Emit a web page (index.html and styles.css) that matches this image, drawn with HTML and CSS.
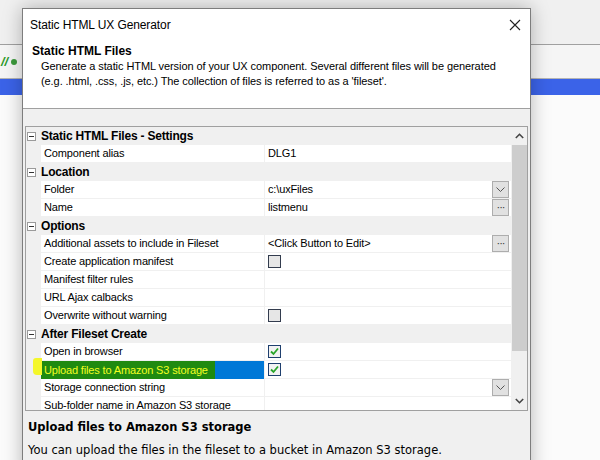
FILE: index.html
```html
<!DOCTYPE html>
<html>
<head>
<meta charset="utf-8">
<link rel="stylesheet" href="styles.css">
</head>
<body>
<div class="desktop">
  <div class="band band-top"></div>
  <div class="band band-tool"><span class="slashes">//</span><span class="gicon"></span></div>
  <div class="band band-blue"></div>
  <div class="band band-rest"></div>
</div>

<div class="dialog">
  <div class="titlebar">
    <span class="title">Static HTML UX Generator</span>
    <svg class="close" width="12" height="12" viewBox="0 0 12 12"><path d="M1 1 L11 11 M11 1 L1 11" stroke="#222" stroke-width="1.1" fill="none"/></svg>
  </div>
  <div class="header">
    <div class="h-title">Static HTML Files</div>
    <div class="h-desc">Generate a static HTML version of your UX component. Several different files will be generated<br>(e.g. .html, .css, .js, etc.) The collection of files is referred to as a 'fileset'.</div>
  </div>
  <div class="body">
    <div class="grid">
      <div class="rows">
        <div class="row cat"><span class="gut"><span class="minus"></span></span><span class="cat-label">Static HTML Files - Settings</span></div>
        <div class="row"><span class="gut"></span><span class="lab">Component alias</span><span class="val">DLG1</span></div>
        <div class="row cat"><span class="gut"><span class="minus"></span></span><span class="cat-label">Location</span></div>
        <div class="row"><span class="gut"></span><span class="lab">Folder</span><span class="val">c:\uxFiles<span class="btn drop"><svg width="9" height="5" viewBox="0 0 9 5"><path d="M0.5 0.5 L4.5 4.5 L8.5 0.5" stroke="#555" fill="none"/></svg></span></span></div>
        <div class="row"><span class="gut"></span><span class="lab">Name</span><span class="val">listmenu<span class="btn dots">&middot;&middot;&middot;</span></span></div>
        <div class="row cat"><span class="gut"><span class="minus"></span></span><span class="cat-label">Options</span></div>
        <div class="row"><span class="gut"></span><span class="lab">Additional assets to include in Fileset</span><span class="val">&lt;Click Button to Edit&gt;<span class="btn dots">&middot;&middot;&middot;</span></span></div>
        <div class="row"><span class="gut"></span><span class="lab">Create application manifest</span><span class="val"><span class="cb"></span></span></div>
        <div class="row"><span class="gut"></span><span class="lab">Manifest filter rules</span><span class="val"></span></div>
        <div class="row"><span class="gut"></span><span class="lab">URL Ajax calbacks</span><span class="val"></span></div>
        <div class="row"><span class="gut"></span><span class="lab">Overwrite without warning</span><span class="val"><span class="cb"></span></span></div>
        <div class="row cat"><span class="gut"><span class="minus"></span></span><span class="cat-label">After Fileset Create</span></div>
        <div class="row"><span class="gut"></span><span class="lab">Open in browser</span><span class="val"><span class="cb on"><svg width="11" height="11" viewBox="0 0 11 11"><path d="M2 5.5 L4.5 8 L9 2.5" stroke="#2aa52a" stroke-width="1.8" fill="none"/></svg></span></span></div>
        <div class="row"><span class="gut"><span class="hl-edge"></span></span><span class="lab sel"><span class="hl-text">Upload files to Amazon S3 storage</span></span><span class="val"><span class="cb on"><svg width="11" height="11" viewBox="0 0 11 11"><path d="M2 5.5 L4.5 8 L9 2.5" stroke="#2aa52a" stroke-width="1.8" fill="none"/></svg></span></span></div>
        <div class="row"><span class="gut"></span><span class="lab">Storage connection string</span><span class="val"><span class="btn drop"><svg width="9" height="5" viewBox="0 0 9 5"><path d="M0.5 0.5 L4.5 4.5 L8.5 0.5" stroke="#555" fill="none"/></svg></span></span></div>
        <div class="row"><span class="gut"></span><span class="lab">Sub-folder name in Amazon S3 storage</span><span class="val"></span></div>
      </div>
      <div class="scroll">
        <svg class="arr" width="9" height="6" viewBox="0 0 9 6"><path d="M0.8 5 L4.5 1.3 L8.2 5" stroke="#444" stroke-width="1.6" fill="none"/></svg>
        <div class="thumb"></div>
        <div class="track"></div>
        <svg class="arr" width="9" height="6" viewBox="0 0 9 6"><path d="M0.8 1 L4.5 4.7 L8.2 1" stroke="#444" stroke-width="1.6" fill="none"/></svg>
      </div>
    </div>
    <div class="info">
      <div class="i-title">Upload files to Amazon S3 storage</div>
      <div class="i-text">You can upload the files in the fileset to a bucket in Amazon S3 storage.</div>
    </div>
  </div>
</div>
</body>
</html>
```

FILE: styles.css
```css
html, body {
  margin: 0;
  padding: 0;
}
body {
  width: 600px;
  height: 460px;
  overflow: hidden;
  position: relative;
  font-family: "Liberation Sans", Arial, sans-serif;
  font-size: 12px;
  color: #000;
  background: #fafafa;
}
.desktop {
  display: flex;
  flex-direction: column;
  height: 460px;
}
.band-top {
  height: 44px;
  background: #f0f0f0;
  border-bottom: 1px solid #a0a0a0;
}
.band-tool {
  height: 33px;
  background: #f5f5f5;
  border-bottom: 1px solid #b4b4b4;
  display: flex;
  align-items: center;
  padding-left: 1px;
}
.slashes {
  color: #2a9a2a;
  font-weight: bold;
  font-style: italic;
  font-size: 13px;
}
.gicon {
  width: 6px;
  height: 6px;
  border-radius: 50%;
  background: #3c9a3c;
  margin-left: 3px;
}
.band-blue {
  height: 16px;
  background: #3b63e8;
}
.band-rest {
  flex: 1;
  background: #fbfbfb;
}

.dialog {
  position: absolute;
  left: 22px;
  top: 8px;
  width: 507px;
  height: 470px;
  border: 1px solid #7d7d7d;
  background: #f0f0f0;
  box-shadow: 0 0 18px rgba(0,0,0,0.28);
  display: flex;
  flex-direction: column;
}
.titlebar {
  height: 31px;
  background: #fff;
  display: flex;
  align-items: center;
  justify-content: space-between;
  padding: 0 9px 0 7px;
}
.title {
  font-size: 12px;
  letter-spacing: -0.1px;
}
.close {
  display: block;
}
.header {
  background: #fff;
  border-bottom: 1px solid #a0a0a0;
  padding: 3px 0 0 9px;
  box-sizing: border-box;
  height: 69px;
}
.h-title {
  font-weight: bold;
  font-size: 12px;
  line-height: 17px;
}
.h-desc {
  padding-left: 9px;
  line-height: 15px;
  font-size: 11px;
  letter-spacing: -0.08px;
  margin-top: -1px;
}
.body {
  flex: 1;
  padding: 17px 2px 0 2px;
}
.grid {
  height: 283px;
  border: 1px solid #a0a0a0;
  background: #fff;
  display: flex;
  overflow: hidden;
}
.rows {
  flex: 1;
  display: flex;
  flex-direction: column;
}
.row {
  height: 18px;
  flex: none;
  display: flex;
  box-sizing: border-box;
  font-size: 11px;
  letter-spacing: -0.15px;
}
.gut {
  width: 15px;
  flex: none;
  background: #f0f0f0;
  position: relative;
  display: flex;
  align-items: center;
  padding-left: 1px;
  box-sizing: border-box;
}
.minus {
  width: 9px;
  height: 9px;
  box-sizing: border-box;
  border: 1px solid #9a9a9a;
  background: #fff;
  position: relative;
}
.minus::after {
  content: "";
  position: absolute;
  left: 1px;
  top: 3px;
  width: 5px;
  height: 1px;
  background: #333;
}
.cat {
  background: #f0f0f0;
}
.cat-label {
  font-weight: bold;
  font-size: 12px;
  letter-spacing: -0.2px;
  line-height: 18px;
}
.lab {
  width: 224px;
  flex: none;
  border-bottom: 1px solid #f0f0f0;
  border-right: 1px solid #f0f0f0;
  padding-left: 3px;
  line-height: 17px;
  white-space: nowrap;
  overflow: hidden;
  box-sizing: border-box;
}
.val {
  flex: 1;
  border-bottom: 1px solid #f0f0f0;
  padding-left: 3px;
  line-height: 17px;
  display: flex;
  align-items: center;
  position: relative;
}
.lab.sel {
  background: #0078d7;
  color: #f2ff22;
  padding-left: 0;
  line-height: 18px;
  border-bottom: none;
}
.hl-text {
  display: inline-block;
  background: #1f8a10;
  padding-left: 3px;
  padding-right: 7px;
}
.hl-edge {
  position: absolute;
  left: 7px;
  top: -3px;
  width: 9px;
  height: 17px;
  background: #f4f72a;
  border-radius: 3px 0 0 4px;
}
.btn {
  position: absolute;
  right: 2px;
  top: 0;
  width: 15px;
  height: 15px;
  background: #e1e1e1;
  border: 1px solid #adadad;
  display: flex;
  align-items: center;
  justify-content: center;
  font-size: 11px;
  line-height: 1;
  color: #333;
  letter-spacing: -1px;
}
.cb {
  width: 13px;
  height: 13px;
  box-sizing: border-box;
  border: 1px solid #333c4e;
  background: #e6e6e6;
  display: flex;
  align-items: center;
  justify-content: center;
}
.cb.on {
  border-color: #1f3f6e;
  background: #f2f2f2;
}
.scroll {
  width: 16px;
  flex: none;
  background: #f0f0f0;
  display: flex;
  flex-direction: column;
  align-items: center;
}
.arr {
  display: block;
  margin: 6px 0;
}
.thumb {
  width: 15px;
  height: 206px;
  background: #cdcdcd;
}
.track {
  flex: 1;
}
.info {
  padding: 8px 0 0 3px;
}
.i-title {
  font-family: "DejaVu Sans", Verdana, sans-serif;
  font-weight: bold;
  font-size: 11.5px;
  line-height: 16px;
}
.i-text {
  font-family: "DejaVu Sans", Verdana, sans-serif;
  font-size: 11.5px;
  margin-top: 8px;
}
```
